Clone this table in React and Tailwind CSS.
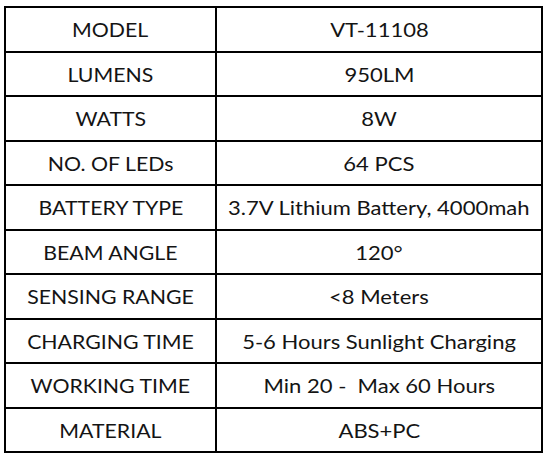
const rows = [
  ['MODEL', 'VT-11108'],
  ['LUMENS', '950LM'],
  ['WATTS', '8W'],
  ['NO. OF LEDs', '64 PCS'],
  ['BATTERY TYPE', '3.7V Lithium Battery, 4000mah'],
  ['BEAM ANGLE', '120°'],
  ['SENSING RANGE', '<8 Meters'],
  ['CHARGING TIME', '5-6 Hours Sunlight Charging'],
  ['WORKING TIME', 'Min 20 -  Max 60 Hours'],
  ['MATERIAL', 'ABS+PC'],
];

export default function App() {
  return (
    <div className="h-[458px] w-[550px] bg-white pl-[4px] pt-[6px]" style={{ fontFamily: 'Lato, sans-serif' }}>
      <table className="w-[539px] border-collapse border-2 border-black text-[18.5px] text-[#141414]">
        <tbody>
          {rows.map(([label, value]) => (
            <tr key={label} className="h-[44.5px]">
              <td className="w-[211px] border-2 border-black pt-[2px] text-center leading-none">
                <span className="inline-block scale-x-[1.15] whitespace-pre">{label}</span>
              </td>
              <td className="border-2 border-black pt-[2px] text-center leading-none">
                <span className="inline-block scale-x-[1.19] whitespace-pre">{value}</span>
              </td>
            </tr>
          ))}
        </tbody>
      </table>
    </div>
  );
}
